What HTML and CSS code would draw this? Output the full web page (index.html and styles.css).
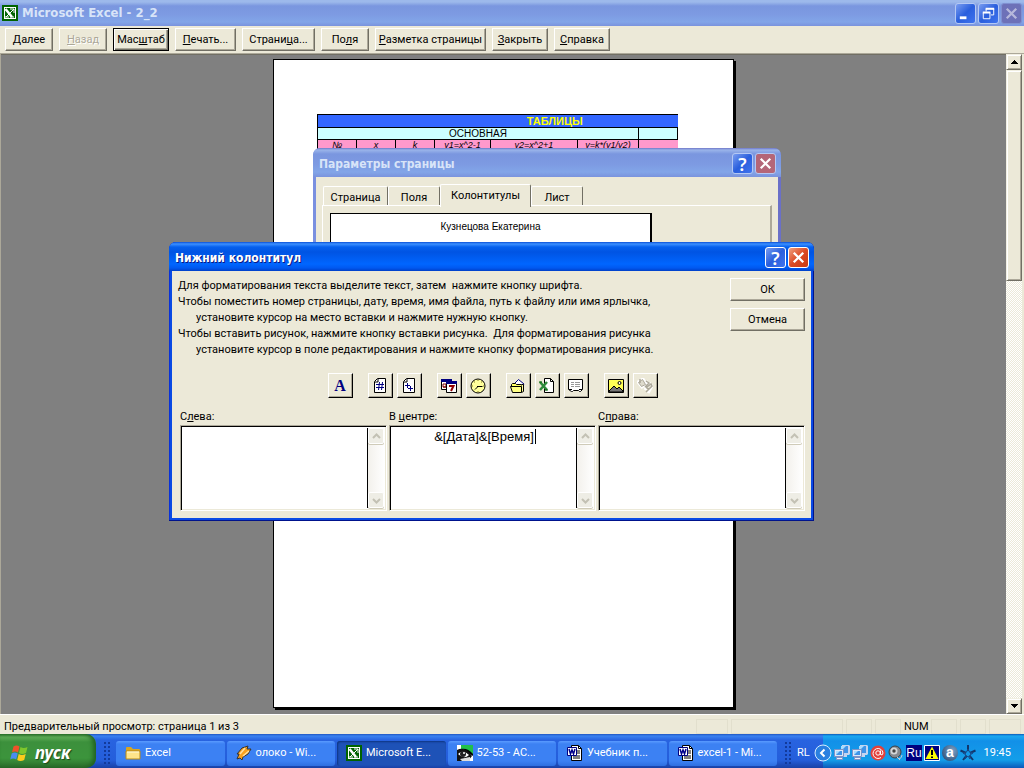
FILE: index.html
```html
<!DOCTYPE html>
<html lang="ru">
<head>
<meta charset="utf-8">
<title>Microsoft Excel - 2_2</title>
<link rel="stylesheet" href="styles.css">
</head>
<body>
<svg class="defs" aria-hidden="true">
  <defs>
    <symbol id="excel" viewBox="0 0 16 16"><path fill="#006300" d="M0 0h16v16H0z"/><path fill="#fff" d="M2 2h12v12H2z"/><path fill="#006300" d="M3 3h10v10H3z"/><path d="M3.500 4l6.500 8" stroke="#fff" stroke-width="2.500"/><path d="M12 4l-8 8M8 4h4v4M3 12h4M8 12h4" stroke="#fff" fill="none"/></symbol>
    <symbol id="word" viewBox="0 0 16 16"><path fill="#fff" stroke="#000" d="M4.500 .5h7l3 3v12h-10z"/><path d="M11.500 .5v3h3M10 6h3M10 8h3M6 11h7M6 13h7" stroke="#000" fill="none"/><path fill="#fff" stroke="#000080" d="M.5 2.500h9v8h-9z"/><path d="M2 4l1.500 5L5 5l1.500 4L8 4" fill="none" stroke="#00008b" stroke-width="1.500"/></symbol>
    <symbol id="up" viewBox="0 0 9 9"><path d="M1 6l3.500-3.500L8 6" fill="none" stroke="#c3c1b4" stroke-width="2"/></symbol>
    <symbol id="down" viewBox="0 0 9 9"><path d="M1 3l3.500 3.500L8 3" fill="none" stroke="#c3c1b4" stroke-width="2"/></symbol>
    <symbol id="cross" viewBox="0 0 20 20"><path d="M5 5l10 10M15 5L5 15" stroke="#fff" stroke-width="2.400"/></symbol>
    <symbol id="net" viewBox="0 0 16 16"><path fill="#c4d4f0" d="M6 0h9l1 1v8l-1 1h-2v2H8V0z"/><path fill="#3f94e8" d="M7 1h7v7H7z"/><path fill="#a8dcff" d="M7 1h5L7 6z"/><path fill="#dfe8f8" stroke="#7d93c8" d="M.5 4.500h9v7h-9z"/><path fill="#3f94e8" d="M2 6h6v4H2z"/><path fill="#a8dcff" d="M2 6h4l-4 4z"/><path fill="#eef2fa" stroke="#7d93c8" d="M2.500 12.500h6v2h-6z"/></symbol>
  </defs>
</svg>

<header class="titlebar titlebar--idle">
  <svg class="icon16"><use href="#excel"/></svg>
  <h1 class="titlebar__text">Microsoft Excel - 2_2</h1>
  <div class="winbtns">
    <button class="winbtn" aria-label="Свернуть"><svg viewBox="0 0 20 20"><path d="M4 13h7v3H4z" fill="#fff"/></svg></button>
    <button class="winbtn" aria-label="Восстановить"><svg viewBox="0 0 20 20"><path d="M4.500 9h7v6.500h-7zM7.500 8V5h8v6.500h-3" fill="none" stroke="#fff"/><path d="M4 9h8M7 5h9" stroke="#fff" stroke-width="2"/></svg></button>
    <button class="winbtn winbtn--dim" aria-label="Закрыть"><svg><use href="#cross"/></svg></button>
  </div>
</header>

<nav class="toolbar">
  <button class="btn btn--s"><span><u>Д</u>алее</span></button>
  <button class="btn btn--s" disabled><span><u>Н</u>азад</span></button>
  <button class="btn btn--m btn--default"><span>Мас<u>ш</u>таб</span></button>
  <button class="btn btn--l"><span><u>П</u>ечать...</span></button>
  <button class="btn btn--xl"><span>Страни<u>ц</u>а...</span></button>
  <button class="btn btn--s"><span>По<u>л</u>я</span></button>
  <button class="btn btn--xxl"><span><u>Р</u>азметка страницы</span></button>
  <button class="btn btn--m"><span><u>З</u>акрыть</span></button>
  <button class="btn btn--m"><span><u>С</u>правка</span></button>
</nav>

<main class="workspace">
  <div class="canvas">
    <article class="sheet">
      <table class="grid">
        <colgroup><col class="c1"><col class="c1"><col class="c1"><col class="c2"><col class="c3"><col class="c4"><col class="c1"></colgroup>
        <tr class="grid__title"><td colspan="7">ТАБЛИЦЫ</td></tr>
        <tr class="grid__group"><td colspan="6">ОСНОВНАЯ</td><td></td></tr>
        <tr class="grid__head"><td>№</td><td>x</td><td>k</td><td>y1=x^2-1</td><td>y2=x^2+1</td><td>y=k*(y1/y2)</td><td></td></tr>
      </table>
    </article>
  </div>
  <div class="scroll">
    <button class="scroll__btn" aria-label="Вверх"><svg viewBox="0 0 7 4"><path d="M3 0h1v1h1v1h1v1h1v1H0V3h1V2h1V1h1z"/></svg></button>
    <div class="scroll__thumb"></div>
    <div class="scroll__track"></div>
    <button class="scroll__btn" aria-label="Вниз"><svg viewBox="0 0 7 4"><path d="M0 0h7v1H6v1H5v1H4v1H3V3H2V2H1V1H0z"/></svg></button>
  </div>
</main>

<footer class="status">
  <span class="status__text">Предварительный просмотр: страница 1 из 3</span>
  <span class="status__pane p34"></span><span class="status__pane p112"></span><span class="status__pane p26"></span><span class="status__pane p26"></span>
  <span class="status__num">NUM</span>
  <span class="status__pane p26"></span><span class="status__pane p26"></span><span class="status__pane p34"></span>
</footer>

<section class="window window--back" aria-label="Параметры страницы">
  <div class="caption caption--idle">
    <h2 class="caption__text">Параметры страницы</h2>
    <button class="winbtn" aria-label="Справка">?</button>
    <button class="winbtn winbtn--close" aria-label="Закрыть"><svg><use href="#cross"/></svg></button>
  </div>
  <div class="setup">
    <div class="tabs" role="tablist">
      <button class="tab tab--w64" role="tab">Страница</button>
      <button class="tab tab--w52" role="tab">Поля</button>
      <button class="tab tab--active" role="tab" aria-selected="true">Колонтитулы</button>
      <button class="tab tab--w52" role="tab">Лист</button>
    </div>
    <div class="tabpanel"><div class="preview">Кузнецова Екатерина</div></div>
  </div>
</section>

<section class="window window--front" aria-label="Нижний колонтитул">
  <div class="caption">
    <h2 class="caption__text">Нижний колонтитул</h2>
    <button class="winbtn" aria-label="Справка">?</button>
    <button class="winbtn winbtn--close" aria-label="Закрыть"><svg><use href="#cross"/></svg></button>
  </div>
  <div class="dialog">
    <div class="intro">
      <div class="intro__text">
        <p>Для форматирования текста выделите текст, затем&nbsp; нажмите кнопку шрифта.</p>
        <p>Чтобы поместить номер страницы, дату, время, имя файла, путь к файлу или имя ярлычка,</p>
        <p class="indent">установите курсор на место вставки и нажмите нужную кнопку.</p>
        <p>Чтобы вставить рисунок, нажмите кнопку вставки рисунка.&nbsp; Для форматирования рисунка</p>
        <p class="indent">установите курсор в поле редактирования и нажмите кнопку форматирования рисунка.</p>
      </div>
      <div class="intro__actions">
        <button class="btn btn--dialog">ОК</button>
        <button class="btn btn--dialog">Отмена</button>
      </div>
    </div>

    <div class="tools">
      <div class="tools__group">
        <button class="tool tool--font" aria-label="Шрифт">A</button>
      </div>
      <div class="tools__group">
        <button class="tool" aria-label="Номер страницы"><svg viewBox="0 0 16 16"><path d="M2.500 3.500l3-3h8v14h-11z" fill="#fff" stroke="#000"/><path d="M3 4h3V1" stroke="#000" fill="none"/><path d="M6.500 12l1-8M9.500 12l1-8M4 6.500h8M4 9.500h8" stroke="#000080"/></svg></button>
        <button class="tool" aria-label="Число страниц"><svg viewBox="0 0 16 16"><path d="M2.500 3.500l3-3h8v14h-11z" fill="#fff" stroke="#000"/><path d="M3 4h3V1" stroke="#000" fill="none"/><path d="M4 7.500h5M6.500 5v5M7 10.500h5M9.500 8v5" stroke="#000080"/></svg></button>
      </div>
      <div class="tools__group">
        <button class="tool" aria-label="Дата"><svg viewBox="0 0 16 16"><path d="M.5 1.500h10v10H.5z" fill="#fff" stroke="#000"/><path d="M0 1h11v3H0z" fill="#000080"/><path d="M2 6h3v3H2zM2 9h3" fill="none" stroke="#800000"/><path d="M5.500 3.500h10v11h-10z" fill="#fff" stroke="#000"/><path d="M5 3h11v3H5z" fill="#000080"/><path d="M8 8h4.500L10 13" fill="none" stroke="#900000" stroke-width="2"/></svg></button>
        <button class="tool" aria-label="Время"><svg viewBox="0 0 16 16"><circle cx="8" cy="8" r="7" fill="#ffff9c" stroke="#000"/><path d="M7 8.500h5.500M8 8.500l-3 3" stroke="#000" fill="none"/><path d="M8 2v1M8 13v1M2 8h1M13 8h1M4 4h1M11 4h1" stroke="#847c20"/></svg></button>
      </div>
      <div class="tools__group">
        <button class="tool" aria-label="Путь к файлу"><svg viewBox="0 0 16 16"><path d="M4 6l4.500-4.500L14 6l-3 4z" fill="#fff" stroke="#000080"/><path d="M1.500 8.500v-2l1-1h3l1 1h5v2" fill="#ffff63" stroke="#000"/><path d="M11.500 6.500h2v7l-2 1" fill="#ffff9c" stroke="#000"/><path d="M.5 8.500h11v6h-9z" fill="#ffff84" stroke="#000"/></svg></button>
        <button class="tool" aria-label="Имя файла"><svg viewBox="0 0 16 16"><path d="M5.500 .5h6l3 3v11h-9z" fill="#fff" stroke="#000"/><path d="M11.500 .5v3h3" fill="none" stroke="#000"/><path d="M1 4l7 8M8 4l-7 8" stroke="#2f8a3c" stroke-width="2.500"/><path d="M0 4h3M6 12h3" stroke="#006000"/></svg></button>
        <button class="tool" aria-label="Имя листа"><svg viewBox="0 0 16 16"><path d="M.5 1.500h14v10l-2 2h-1l-1-1h-5l-1 1h-1l-3-2z" fill="#fff" stroke="#000"/><path d="M3 4.500h3M7 4.500h5M3 6.500h3M7 6.500h5M3 8.500h3M7 8.500h5" stroke="#999"/><path d="M1 11.500h3M11 11.500h3" stroke="#000"/></svg></button>
      </div>
      <div class="tools__group">
        <button class="tool" aria-label="Вставить рисунок"><svg viewBox="0 0 16 16"><path d="M.5 1.500h15v13H.5z" fill="#ffff55" stroke="#000"/><path d="M1 13l5-5 3 3 2-2 4 4v1H1z" fill="#777" stroke="#000"/><circle cx="11.500" cy="5" r="1.500" fill="#fff" stroke="#000"/></svg></button>
        <button class="tool" disabled aria-label="Формат рисунка"><svg viewBox="0 0 16 16"><path d="M1 4l5-3 3 5-4 3zM9 3l2 3-3 6M12 5l3 3-4 7" fill="none" stroke="#fff" stroke-width="3"/><path d="M1.500 4.500l4-3 3 5-4 2z" fill="#dedbcd" stroke="#aca899"/><path d="M3 1v4M9 3l3 2-4 4M10 9l4-3 1 2-6 6M9 9l3 3" fill="none" stroke="#aca899" stroke-width="1.500"/></svg></button>
      </div>
    </div>

    <div class="parts">
      <div class="part">
        <label for="left">С<u>л</u>ева:</label>
        <div class="field"><textarea id="left"></textarea><div class="mini"><button aria-label="Вверх" disabled><svg><use href="#up"/></svg></button><button aria-label="Вниз" disabled><svg><use href="#down"/></svg></button></div></div>
      </div>
      <div class="part">
        <label for="center">В <u>ц</u>ентре:</label>
        <div class="field"><textarea id="center">&amp;[Дата]&amp;[Время]</textarea><i class="caret"></i><div class="mini"><button aria-label="Вверх" disabled><svg><use href="#up"/></svg></button><button aria-label="Вниз" disabled><svg><use href="#down"/></svg></button></div></div>
      </div>
      <div class="part">
        <label for="right">С<u>п</u>рава:</label>
        <div class="field"><textarea id="right"></textarea><div class="mini"><button aria-label="Вверх" disabled><svg><use href="#up"/></svg></button><button aria-label="Вниз" disabled><svg><use href="#down"/></svg></button></div></div>
      </div>
    </div>
  </div>
</section>

<footer class="taskbar">
  <button class="start">
    <svg viewBox="0 0 20 20"><path d="M3.500 3.500q3-2 6 0L8 9.500q-3-2-6 0z" fill="#f0522a"/><path d="M10.500 4q3 2 7 0L16 10q-4 2-7 0z" fill="#7ec62c"/><path d="M1.700 10.500q3-2 6 0l-1.500 6q-3-2-6 0z" fill="#4a8cf0"/><path d="M8.700 11q3 2 7 0l-1.500 6q-4 2-7 0z" fill="#fccb1c"/></svg>
    <span>пуск</span>
  </button>
  <i class="grip"></i>
  <div class="tasks">
    <button class="task"><svg viewBox="0 0 16 16"><path d="M1 3q0-1 1-1h4l2 2h6q1 0 1 1v9H1z" fill="#d9a520"/><path d="M1 6h14v8H1z" fill="#ffe58a" stroke="#b98a18"/><path d="M2 7h12" stroke="#fffbe0"/></svg><span>Excel</span></button>
    <button class="task"><svg viewBox="0 0 16 16"><path d="M6 3l6-2-1 3h4l-3 5-5 3-1 3-2-2-3 1 2-5H1z" fill="#f8a01c" stroke="#333"/><path d="M9 3L4 9M13 6l-6 5" stroke="#ffe0a0" stroke-width="1.500"/></svg><span>олоко - Wi...</span></button>
    <button class="task task--active"><svg><use href="#excel"/></svg><span>Microsoft E...</span></button>
    <button class="task"><svg viewBox="0 0 16 16"><path d="M0 0h16v16H0z" fill="#fff"/><path d="M0 0h4v3l12 8V0z"/><path d="M4 0h12v9Q11 3 4 4z" fill="#21c04a"/><path d="M0 5q8-4 15 6l-4 5H0z" fill="#111"/><path d="M1 9q5-5 11 1-5 5-11-1z" fill="#fff"/><circle cx="6" cy="9" r="3" fill="#222"/><circle cx="7" cy="8" r="1" fill="#fff"/><path d="M3 14l10-2v4H5z" fill="#ddd"/></svg><span>52-53 - AC...</span></button>
    <button class="task"><svg><use href="#word"/></svg><span>Учебник п...</span></button>
    <button class="task"><svg><use href="#word"/></svg><span>excel-1 - Mi...</span></button>
  </div>
  <i class="grip"></i>
  <span class="lang">RL</span>
  <div class="tray">
    <button class="chevron" aria-label="Показать скрытые значки"><svg viewBox="0 0 18 18"><circle cx="9" cy="9" r="8" fill="#2a80e0" stroke="#d6ecff"/><path d="M10.500 5.500L7 9l3.500 3.500" fill="none" stroke="#fff" stroke-width="2"/></svg></button>
    <svg class="icon16"><use href="#net"/></svg>
    <svg class="icon16"><use href="#net"/></svg>
    <svg class="icon16" viewBox="0 0 16 16"><circle cx="8" cy="8" r="7.500" fill="#e2413b"/><circle cx="8" cy="8" r="2.200" fill="none" stroke="#fff"/><path d="M10.500 5.500v4q2 1.500 2.500-1.500a5 5 0 1 0-2 4.500" fill="none" stroke="#fff"/></svg>
    <svg class="icon16" viewBox="0 0 16 16"><circle cx="7" cy="7" r="6" fill="#85898f" stroke="#3c4046"/><circle cx="6" cy="6" r="3.500" fill="#d4d6d8"/><circle cx="6" cy="6" r="1.700" fill="#444"/><path d="M11 14q3-1 3-4M9 12l3 3" stroke="#c5cbd6" fill="none"/></svg>
    <span class="ru">Ru</span>
    <svg class="icon16" viewBox="0 0 16 16"><path d="M.5 .5h15v15H.5z" fill="#000080" stroke="#fff"/><path d="M8 1.500L14.500 14h-13z" fill="#ff0"/><path d="M8 5v5M8 11.500v1.500" stroke="#000" stroke-width="2"/></svg>
    <span class="ball">a</span>
    <svg class="icon16" viewBox="0 0 16 16"><path d="M8 0v6M15.500 5.500L10 8M13 15l-3.500-4.500M3 15l3.500-4.500M.5 5.500L6 8" stroke="#12366b" stroke-width="2"/><path d="M8 4l1.500 3L13 8l-3 2v4L8 11l-3 3 1-4-3-2 3.500-1z" fill="none" stroke="#164a8a"/></svg>
    <time class="clock">19:45</time>
  </div>
</footer>
</body>
</html>
```
FILE: styles.css
```css
:root {
  --face: #ece9d8;
  --shadow: #aca899;
  --dark: #716f64;
  --ui: Roboto, "Noto Sans", sans-serif;
  --title: "DejaVu Sans Condensed", sans-serif;
}
* { box-sizing: border-box; }
body {
  margin: 0;
  height: 100vh;
  display: flex;
  flex-direction: column;
  overflow: hidden;
  background: var(--face);
  color: #000;
  font: 11px/14px var(--ui);
}
button { font: inherit; color: inherit; padding: 0; margin: 0; border: 0; }
h1, h2, p { margin: 0; }
svg { display: block; }
.defs { position: absolute; width: 0; height: 0; }
.icon16 { width: 16px; height: 16px; flex: none; }

/* main window */
.titlebar {
  display: flex;
  align-items: center;
  height: 26px;
  flex: none;
  padding: 0 2px;
  gap: 4px;
  background: linear-gradient(#9db9eb 0, #9db9eb 2px, #7a96df 6px, #7d9ae2 14px, #82a5e8 22px, #7a93dd 100%);
}
.titlebar__text { flex: 1; font: bold 13px/18px var(--title); color: #d8e4f8; }
.winbtns { display: flex; gap: 2px; }
.winbtn {
  width: 21px;
  height: 21px;
  display: grid;
  place-items: center;
  border: 1px solid #fff;
  border-radius: 3px;
  background: linear-gradient(135deg, #7a9df0, #2a5fdd 50%, #3f73ee);
  color: #fff;
  font: 600 18px/18px "Noto Sans", sans-serif;
}
.winbtn svg { width: 19px; height: 19px; }
.winbtn--close { background: linear-gradient(135deg, #f0a080, #dc4a24 50%, #c83a12); }
.winbtn--dim { background: #6d71b8; }
.winbtn--dim svg { opacity: .5; }
.titlebar--idle .winbtn, .caption--idle .winbtn { border-color: #b4c8f4; }
.titlebar--idle .winbtn--dim { border-color: #8090d0; }
.caption--idle .winbtn--close { background: #b46678; }

.toolbar { display: flex; gap: 6px; padding: 2px 5px; height: 27px; flex: none; }
.btn {
  height: 23px;
  background: var(--face);
  border: 1px solid;
  border-color: #fff var(--dark) var(--dark) #fff;
  box-shadow: inset -1px -1px var(--shadow);
  white-space: nowrap;
}
.btn--s { width: 48px; }
.btn--m { width: 56px; }
.btn--l { width: 61px; }
.btn--xl { width: 73px; }
.btn--xxl { width: 111px; }
.btn--dialog { width: 75px; }
.btn--default { border-color: #000; box-shadow: inset 1px 1px #fff, inset -1px -1px var(--dark), inset -2px -2px var(--shadow); }
.btn:disabled { color: var(--shadow); text-shadow: 1px 1px #fff; }

.workspace {
  flex: 1;
  display: flex;
  min-height: 0;
  padding-right: 2px;
  border-top: 1px solid var(--shadow);
  border-left: 1px solid var(--shadow);
}
.canvas {
  flex: 1;
  display: flex;
  justify-content: center;
  background: #808080;
  border-top: 1px solid var(--dark);
  padding: 4px 0 6px;
}
.sheet {
  width: 461px;
  background: #fff;
  border: 1px solid #000;
  box-shadow: 2px 2px #000;
  padding: 54px 55px 0 43px;
}
.grid { width: 100%; border-collapse: collapse; table-layout: fixed; font: 9px/11px "Liberation Sans", sans-serif; }
.grid td { padding: 0; border: 1px solid #000; text-align: center; white-space: nowrap; overflow: hidden; }
.c1 { width: 39px; }
.c2 { width: 56px; }
.c3 { width: 87px; }
.c4 { width: 61px; }
.grid__title td { background: #3366ff; color: #ff0; font: bold 11px/12px "Liberation Sans", sans-serif; padding-left: 114px; border-right: 0; }
.grid__group td { background: #ccffff; font-size: 10px; }
.grid__head td { background: #ff99cc; font-style: italic; border-bottom: 0; }
.grid__head td:last-child { border-right: 0; }

.scroll { width: 16px; display: flex; flex-direction: column; }
.scroll__btn, .scroll__thumb {
  background: var(--face);
  border: 1px solid;
  border-color: #f1efe2 var(--dark) var(--dark) #f1efe2;
  box-shadow: inset 1px 1px #fff, inset -1px -1px var(--shadow);
}
.scroll__btn { height: 16px; display: grid; place-items: center; }
.scroll__btn svg { width: 7px; height: 4px; shape-rendering: crispEdges; }
.scroll__thumb { flex: 0 0 32%; }
.scroll__track { flex: 1; background: repeating-conic-gradient(#fff 0 25%, var(--face) 0 50%) 0 0 / 2px 2px; }

.status { display: flex; align-items: center; gap: 3px; height: 20px; flex: none; padding: 4px 3px 0 4px; border-top: 1px solid #fff; }
.status__text { flex: 1; }
.status__pane { height: 15px; border: 1px solid #e2dfcd; }
.status__num { width: 24px; }
.p26 { width: 26px; }
.p34 { width: 32px; }
.p112 { width: 112px; }

/* dialogs */
.window { position: absolute; border-radius: 7px 7px 0 0; }
.window--back { left: 313px; top: 148px; width: 468px; background: linear-gradient(90deg, #7a90e0, #6a70c8); padding: 0 3px; }
.window--front { left: 169px; top: 242px; width: 645px; background: #0a4ae4; padding: 0 3px 3px; box-shadow: inset -1px -1px #00138c, inset 1px 0 #0831d9; }
.caption {
  display: flex;
  align-items: center;
  gap: 2px;
  height: 29px;
  margin: 0 -3px;
  padding: 2px 5px 0 6px;
  border-radius: 7px 7px 0 0;
  background: linear-gradient(#0a50d8 0, #3c90ff 2px, #0560ee 5px, #0054e3 10px, #0066ff 22px, #0058f0 26px, #0040c8 100%);
}
.caption--idle { background: linear-gradient(#7078c8 0, #9ab4ea 2px, #7a96df 6px, #7d9ae2 16px, #82a5e8 24px, #7a93dd 100%); }
.caption__text { flex: 1; font: bold 12px/18px var(--title); color: #fff; text-shadow: 1px 1px #0a1883; }
.caption--idle .caption__text { color: #d8e4f8; text-shadow: none; }

.setup { background: var(--face); padding: 7px 6px 0; height: 72px; }
.tabs { display: flex; align-items: flex-end; height: 21px; padding-left: 1px; }
.tab {
  height: 19px;
  background: var(--face);
  border: 1px solid;
  border-color: #fff var(--dark) transparent #fff;
  border-bottom: 0;
  border-radius: 2px 2px 0 0;
  padding-top: 3px;
}
.tab--w64 { width: 65px; }
.tab--w52 { width: 52px; }
.tab--active { width: 91px; height: 23px; margin-bottom: -2px; padding: 0; position: relative; }
.tabpanel { height: 44px; border: 1px solid #fff; border-right: 2px solid var(--shadow); border-bottom: 0; padding: 7px 118px 0 7px; }
.preview { height: 36px; background: #fff; border: 1px solid #000; border-right-width: 2px; border-bottom: 0; padding-top: 6px; text-align: center; font: 10px/14px "Liberation Sans", sans-serif; }

.dialog { background: var(--face); padding: 7px 6px 7px 6px; }
.intro { display: flex; justify-content: space-between; line-height: 16px; white-space: nowrap; }
.intro__actions { display: flex; flex-direction: column; gap: 7px; }
.indent { padding-left: 18px; }
.tools { display: flex; justify-content: center; gap: 15px; padding: 15px 0 10px 2px; }
.tools__group { display: flex; gap: 4px; }
.tool {
  width: 25px;
  height: 25px;
  display: grid;
  place-items: center;
  background: var(--face);
  border: 1px solid;
  border-color: #fff #000 #000 #fff;
  box-shadow: inset -1px -1px var(--shadow);
}
.tool svg { width: 16px; height: 16px; }
.tool--font { font: bold 16px/18px "Liberation Serif", serif; color: #000080; }
.parts { display: grid; grid-template-columns: repeat(3, 1fr); gap: 2px; padding-left: 2px; }
.part label { display: block; line-height: 17px; }
.field {
  position: relative;
  display: flex;
  height: 86px;
  background: #fff;
  border: 1px solid;
  border-color: var(--shadow) #fff #fff var(--shadow);
  box-shadow: inset 1px 1px #000, inset -1px -1px var(--face);
  padding: 2px 1px 2px 2px;
}
.field textarea {
  flex: 1;
  min-width: 0;
  resize: none;
  border: 0;
  outline: 0;
  padding: 1px 0;
  background: transparent;
  text-align: center;
  overflow: hidden;
  font: 13px/16px "Liberation Sans", sans-serif;
}
.caret { position: absolute; top: 3px; left: calc(50% + 42px); width: 1px; height: 15px; background: #000; }
.mini { width: 18px; display: flex; flex-direction: column; justify-content: space-between; border-left: 1px solid #000; background: linear-gradient(90deg, #f3f1ec, #fff); }
.mini button {
  width: 16px;
  height: 16px;
  display: grid;
  place-items: center;
  border: 1px solid #fff;
  border-radius: 2px;
  background: #eeede5;
  box-shadow: 0 1px #cfcbb8;
}
.mini svg { width: 9px; height: 9px; }

/* taskbar */
.taskbar {
  display: flex;
  align-items: center;
  height: 34px;
  flex: none;
  background: linear-gradient(#1f55c0 0, #3a81f0 2px, #2863e0 6px, #245edb 26px, #1941a5 100%);
  color: #fff;
}
.start {
  display: flex;
  align-items: center;
  gap: 5px;
  align-self: stretch;
  width: 96px;
  padding: 4px 0 0 10px;
  border-radius: 0 10px 10px 0;
  background: linear-gradient(#2f7a2f 0, #5eac56 3px, #3c903c 8px, #3c943c 24px, #2a6b2a 100%);
  box-shadow: inset -3px 0 4px #226322;
  font: italic bold 17px/22px "Noto Sans", sans-serif;
  text-shadow: 1px 1px 1px #1c4a1c;
}
.start svg { width: 20px; height: 20px; }
.grip { width: 6px; height: 22px; margin: 4px 6px 0 8px; background: radial-gradient(circle at 1px 1px, #123a9c 1px, transparent 1px) 0 0 / 4px 4px; }
.tasks { display: flex; flex: 1; gap: 2px; padding-top: 4px; }
.task {
  flex: 1 1 0;
  min-width: 0;
  display: flex;
  align-items: center;
  gap: 4px;
  height: 25px;
  padding-left: 9px;
  border-radius: 3px;
  background: linear-gradient(#5a9bff 0, #3c81f3 3px, #3c81f3 20px, #2f6fe0 100%);
  white-space: nowrap;
}
.task svg { width: 16px; height: 16px; flex: none; }
.task--active { background: #1e52b7; box-shadow: inset 1px 1px 2px #0e3480; }
.lang { width: 26px; padding-top: 4px; }
.tray {
  display: flex;
  align-items: center;
  gap: 2px;
  align-self: stretch;
  width: 201px;
  padding: 4px 13px 0 0;
  background: linear-gradient(#0c59b9 0, #1aa8f0 2px, #1290e8 7px, #139ee9 26px, #0c59b9 100%);
}
.chevron { width: 18px; height: 18px; flex: none; margin-left: -9px; background: none; }
.chevron svg { width: 18px; height: 18px; }
.ru { width: 16px; height: 16px; background: #000080; text-align: center; font: 12px/16px "Liberation Sans", sans-serif; }
.ball { width: 16px; height: 16px; border-radius: 8px; background: radial-gradient(circle at 10px 6px, #7fa6cc, #1c3c64); text-align: center; font: bold 14px/14px "Liberation Sans", sans-serif; }
.clock { flex: 1; text-align: right; }
```
